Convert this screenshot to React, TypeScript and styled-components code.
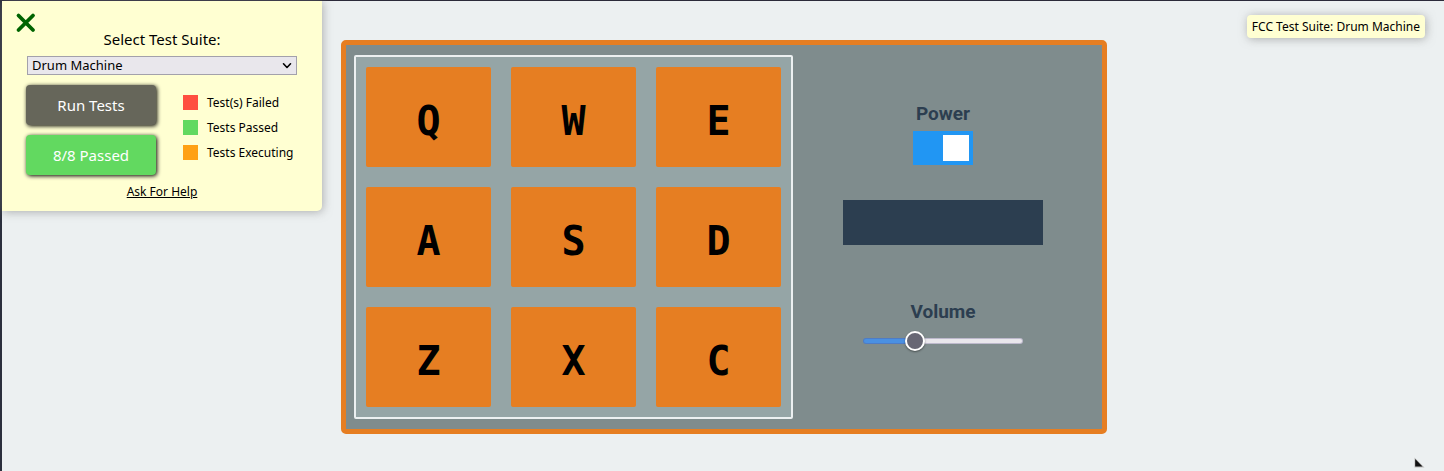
import React, { useState } from "react";
import styled, { createGlobalStyle } from "styled-components";

const GlobalStyle = createGlobalStyle`
  *, *::before, *::after { box-sizing: border-box; }
  body {
    margin: 0;
    background: #ecf0f1;
    color: #000;
    font-family: "Noto Sans", sans-serif;
  }
`;

const Page = styled.div`
  min-height: 100vh;
  padding: 39px 0 24px 2px;
  border-top: 1px solid #2b2a3a;
  border-left: 2px solid #2b2f3d;
`;

/* Test suite panel */

const SuitePanel = styled.aside`
  position: absolute;
  top: 1px;
  left: 2px;
  z-index: 2;
  display: flex;
  flex-direction: column;
  width: 320px;
  padding: 28px 24px 10px;
  border-radius: 0 0 5px 0;
  background: #ffffd2;
  box-shadow: 1px 1px 10px rgba(128, 128, 128, 0.6);
`;

const CloseButton = styled.button`
  position: absolute;
  top: 11px;
  left: 13px;
  display: flex;
  padding: 0;
  border: 0;
  background: none;
  cursor: pointer;
`;

const SuiteLabel = styled.label`
  font-size: 15px;
  line-height: 20px;
  text-align: center;
`;

const SelectBox = styled.div`
  position: relative;
  display: flex;
  margin: 7px 1px 10px;

  svg {
    position: absolute;
    top: 6px;
    right: 5px;
    pointer-events: none;
  }
`;

const SuiteSelect = styled.select`
  appearance: none;
  width: 100%;
  height: 19px;
  padding: 0 4px;
  border: 1px solid #a3a1ab;
  border-radius: 0;
  background: #e9e7ec;
  color: #000;
  font-family: inherit;
  font-size: 13px;
  line-height: 17px;
`;

const SuiteBody = styled.div`
  display: flex;
  gap: 27px;
`;

const ButtonStack = styled.div`
  display: flex;
  flex-direction: column;
  gap: 10px;
`;

const SuiteButton = styled.button<{ $color: string }>`
  width: 130px;
  height: 40px;
  padding: 0;
  border: 0;
  border-radius: 4px;
  background: ${(p) => p.$color};
  box-shadow: 1px 1px 4px #000;
  color: #fff;
  font-family: inherit;
  font-size: 15px;
  cursor: pointer;
`;

const Legend = styled.ul`
  display: flex;
  flex-direction: column;
  gap: 10px;
  margin: 10px 0 0;
  padding: 0;
  list-style: none;
`;

const LegendItem = styled.li<{ $color: string }>`
  display: flex;
  align-items: center;
  gap: 9px;
  height: 15px;
  font-size: 12px;
  white-space: nowrap;

  &::before {
    content: "";
    width: 15px;
    height: 15px;
    background: ${(p) => p.$color};
  }
`;

const HelpLink = styled.a`
  align-self: center;
  margin-top: 7px;
  color: #000;
  font-size: 12px;
  line-height: 19px;
`;

const SuiteBadge = styled.div`
  position: absolute;
  top: 15px;
  right: 19px;
  padding: 3px 5px;
  border-radius: 4px;
  background: #ffffd2;
  box-shadow: 1px 1px 10px rgba(128, 128, 128, 0.6);
  font-size: 12px;
  line-height: 17px;
`;

/* Drum machine */

const Machine = styled.main`
  display: flex;
  flex-wrap: wrap;
  justify-content: center;
  width: fit-content;
  max-width: 100%;
  margin: 0 auto;
  padding: 10px 9px 10px 8px;
  border: 5px solid #e67e22;
  border-radius: 5px;
  background: #7f8c8d;
`;

const PadGrid = styled.div`
  display: grid;
  grid-template-columns: repeat(3, minmax(0, 125px));
  gap: 20px;
  padding: 10px;
  border: 2px solid #ecf0f1;
  border-radius: 2px;
  background: #95a5a6;
`;

const Pad = styled.button`
  height: 100px;
  padding: 8px 0 0;
  border: 0;
  border-radius: 2px;
  background: #e67e22;
  color: #000;
  font: bold 40px/40px "DejaVu Sans Mono", monospace;
  cursor: pointer;
`;

const Controls = styled.div`
  display: flex;
  flex-direction: column;
  align-items: center;
  width: 300px;
  padding-top: 47px;
`;

const ControlGroup = styled.div`
  display: flex;
  flex-direction: column;
  align-items: center;
  gap: 5px;
`;

const ControlLabel = styled.label`
  color: #2c3e50;
  font: bold 19px/24px Roboto, sans-serif;
`;

const Switch = styled.input`
  appearance: none;
  display: flex;
  justify-content: flex-start;
  width: 60px;
  height: 34px;
  margin: 0;
  padding: 4px;
  background: #ccc;
  cursor: pointer;

  &::before {
    content: "";
    width: 26px;
    height: 26px;
    background: #fff;
  }

  &:checked {
    justify-content: flex-end;
    background: #2196f3;
  }
`;

const Display = styled.output`
  width: 200px;
  height: 45px;
  margin: 35px 0 55px;
  background: #2c3e50;
  color: #ecf0f1;
  font: 18px/45px Roboto, sans-serif;
  text-align: center;
`;

const Slider = styled.input`
  appearance: none;
  width: 160px;
  height: 20px;
  margin: 2px 0 0;
  background: none;

  &::-webkit-slider-runnable-track {
    height: 6px;
    border: 1px solid rgba(90, 80, 130, 0.3);
    border-radius: 3px;
    background: linear-gradient(to right, #4a90e2 var(--level), #e9e7ec var(--level)) border-box;
  }

  &::-webkit-slider-thumb {
    appearance: none;
    width: 20px;
    height: 20px;
    margin-top: -8px;
    border: 2px solid #fff;
    border-radius: 50%;
    background: #676774;
    box-shadow: 0 1px 2px rgba(0, 0, 0, 0.45);
  }
`;

const Pointer = styled.svg`
  position: absolute;
  right: 19px;
  top: 457px;
`;

const padKeys = ["Q", "W", "E", "A", "S", "D", "Z", "X", "C"];

const legend = [
  { text: "Test(s) Failed", color: "#ff4f40" },
  { text: "Tests Passed", color: "#62d960" },
  { text: "Tests Executing", color: "#ffa114" },
];

export default function App() {
  const [power, setPower] = useState(true);
  const [volume, setVolume] = useState(30);

  return (
    <>
      <GlobalStyle />
      <Page>
        <SuitePanel>
          <CloseButton type="button" aria-label="Close test panel">
            <svg width="24" height="22" viewBox="0 0 24 22" aria-hidden="true">
              <path d="M3.500 3.500L18 18M18 3.500L3.500 18" stroke="#006400" strokeWidth="3.800" strokeLinecap="round" />
            </svg>
          </CloseButton>
          <SuiteLabel htmlFor="suite">Select Test Suite:</SuiteLabel>
          <SelectBox>
            <SuiteSelect id="suite" defaultValue="Drum Machine">
              <option>Drum Machine</option>
            </SuiteSelect>
            <svg width="10" height="8" viewBox="0 0 10 8" aria-hidden="true">
              <path d="M1.500 1.800L5 5.500L8.500 1.800" fill="none" stroke="#000" strokeWidth="1.600" strokeLinecap="round" strokeLinejoin="round" />
            </svg>
          </SelectBox>
          <SuiteBody>
            <ButtonStack>
              <SuiteButton type="button" $color="#66665a">Run Tests</SuiteButton>
              <SuiteButton type="button" $color="#62d960">8/8 Passed</SuiteButton>
            </ButtonStack>
            <Legend>
              {legend.map((item) => (
                <LegendItem key={item.text} $color={item.color}>{item.text}</LegendItem>
              ))}
            </Legend>
          </SuiteBody>
          <HelpLink href="#help">Ask For Help</HelpLink>
        </SuitePanel>

        <SuiteBadge>FCC Test Suite: Drum Machine</SuiteBadge>

        <Machine>
          <PadGrid>
            {padKeys.map((key) => (
              <Pad key={key} type="button">{key}</Pad>
            ))}
          </PadGrid>
          <Controls>
            <ControlGroup>
              <ControlLabel htmlFor="power">Power</ControlLabel>
              <Switch
                id="power"
                type="checkbox"
                checked={power}
                onChange={(e) => setPower(e.target.checked)}
              />
            </ControlGroup>
            <Display aria-label="Current sound" />
            <ControlGroup>
              <ControlLabel htmlFor="volume">Volume</ControlLabel>
              <Slider
                id="volume"
                type="range"
                value={volume}
                onChange={(e) => setVolume(Number(e.target.value))}
                style={{ "--level": `${volume}%` } as React.CSSProperties}
              />
            </ControlGroup>
          </Controls>
        </Machine>

        <Pointer width="11" height="11" viewBox="0 0 11 11" aria-hidden="true">
          <path d="M0.500 0.500V10.500H10.500Z" fill="#bbb" />
          <path d="M1.200 2V9.500H8.500Z" fill="#111" />
        </Pointer>
      </Page>
    </>
  );
}
